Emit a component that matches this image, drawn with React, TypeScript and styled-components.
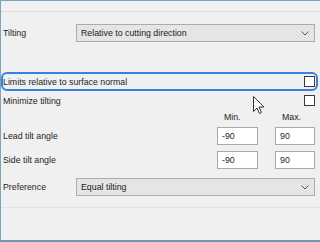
import React from 'react'
import styled, { createGlobalStyle } from 'styled-components'

const GlobalStyle = createGlobalStyle`
  html, body {
    margin: 0;
    padding: 0;
    background: #f0f0f0;
  }
  #root {
    width: 320px;
    height: 242px;
  }
`

const Frame = styled.div`
  position: relative;
  box-sizing: border-box;
  width: 320px;
  height: 242px;
  display: flex;
  flex-direction: column;
  background: #f0f0f0;
  border-top: 1px solid #7ea2bb;
  border-left: 1px solid #7ea2bb;
  border-bottom: 2px solid #6f98b4;
  font-family: 'Liberation Sans', Arial, sans-serif;
  font-size: 8.8px;
  color: #1e1e1e;
`

const TopStrip = styled.div`
  height: 10px;
  border-bottom: 1px solid #dcdcdc;
`

const Separator = styled.div<{ top: number }>`
  margin-top: ${({ top }) => top}px;
  border-bottom: 1px solid #e2e2e2;
`

const Row = styled.div<{ top: number; height: number }>`
  margin-top: ${({ top }) => top}px;
  height: ${({ height }) => height}px;
  padding: 0 5px 0 2px;
  display: grid;
  grid-template-columns: 73px 1fr;
  align-items: center;
`

const NumberRow = styled(Row)`
  grid-template-columns: 1fr 41px 40px;
  column-gap: 17px;
`

const CheckRow = styled.div<{ top: number; focused?: boolean }>`
  box-sizing: border-box;
  margin-top: ${({ top }) => top}px;
  height: ${({ focused }) => (focused ? 19 : 11)}px;
  margin-left: ${({ focused }) => (focused ? 0 : 2)}px;
  margin-right: ${({ focused }) => (focused ? 2 : 4)}px;
  border: ${({ focused }) => (focused ? '2px solid #3a7fe4' : 'none')};
  border-radius: 6px;
  display: flex;
  align-items: center;
  justify-content: space-between;
`

const Label = styled.span`
  white-space: nowrap;
`

const HeadLabel = styled.span`
  padding-left: 7px;
  white-space: nowrap;
`

const Select = styled.div`
  box-sizing: border-box;
  height: 18px;
  display: flex;
  align-items: center;
  justify-content: space-between;
  padding: 0 5px 0 4px;
  background: #e5e5e5;
  border: 1px solid #acacac;
  color: #222;
`

const Input = styled.div`
  box-sizing: border-box;
  height: 18px;
  display: flex;
  align-items: center;
  padding-left: 4px;
  background: #fff;
  border: 1px solid #a9a9a9;
`

const Checkbox = styled.div`
  box-sizing: border-box;
  width: 11px;
  height: 11px;
  background: #fff;
  border: 1px solid #3a3a3a;
  margin-right: 1px;
`

const Cursor = styled.svg`
  position: absolute;
  left: 252px;
  top: 95px;
`

const Chevron = () => (
  <svg width="8" height="5" viewBox="0 0 8 5">
    <polyline points="0.5,0.5 4,4 7.5,0.5" fill="none" stroke="#555" strokeWidth="1" />
  </svg>
)

const Dropdown = ({ value }: { value: string }) => (
  <Select>
    <span>{value}</span>
    <Chevron />
  </Select>
)

const App = () => {
  return (
    <>
      <GlobalStyle />
      <Frame>
        <TopStrip />
        <Row top={12} height={18}>
          <Label>Tilting</Label>
          <Dropdown value="Relative to cutting direction" />
        </Row>
        <CheckRow top={30} focused>
          <Label>Limits relative to surface normal</Label>
          <Checkbox />
        </CheckRow>
        <CheckRow top={4}>
          <Label>Minimize tilting</Label>
          <Checkbox />
        </CheckRow>
        <NumberRow top={5} height={12}>
          <span />
          <HeadLabel>Min.</HeadLabel>
          <HeadLabel>Max.</HeadLabel>
        </NumberRow>
        <NumberRow top={4} height={18}>
          <Label>Lead tilt angle</Label>
          <Input>-90</Input>
          <Input>90</Input>
        </NumberRow>
        <NumberRow top={6} height={18}>
          <Label>Side tilt angle</Label>
          <Input>-90</Input>
          <Input>90</Input>
        </NumberRow>
        <Row top={9} height={18}>
          <Label>Preference</Label>
          <Dropdown value="Equal tilting" />
        </Row>
        <Separator top={11} />
        <Cursor width="12" height="19" viewBox="0 0 12 19">
          <path d="M0.5,0.5 L0.5,15.5 L4,12 L6.5,17.5 L8.5,16.5 L6,11 L11,11 Z" fill="#fff" stroke="#333" strokeWidth="1" strokeLinejoin="round" />
        </Cursor>
      </Frame>
    </>
  )
}

export default App
